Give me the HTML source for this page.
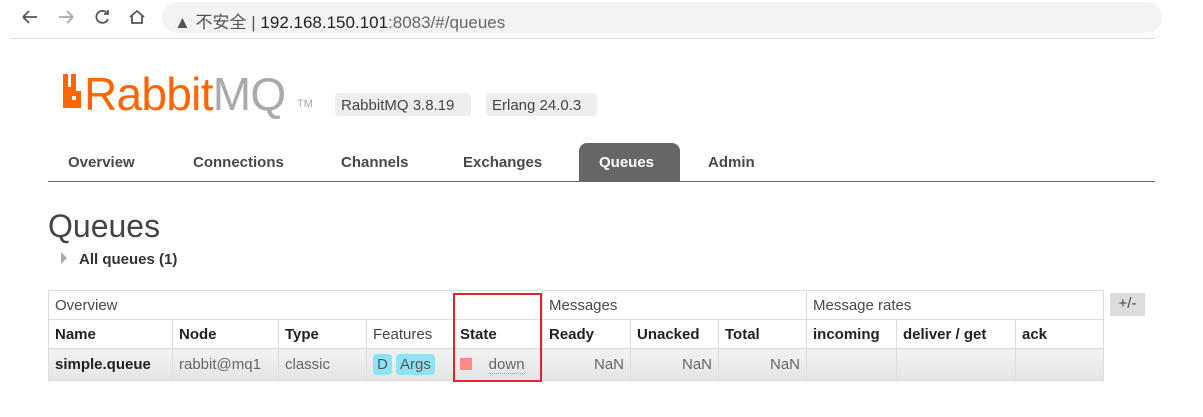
<!DOCTYPE html>
<html><head><meta charset="utf-8"><style>
*{margin:0;padding:0;box-sizing:border-box}
body{width:1203px;height:417px;background:#fff;position:relative;overflow:hidden;font-family:"Liberation Sans","Noto Sans CJK SC",sans-serif;color:#484848}
.a{position:absolute;white-space:nowrap}
.tab{position:absolute;top:154px;font-weight:bold;font-size:15px;color:#484848}
table{position:absolute;left:48px;top:290px;border-collapse:collapse;font-size:15px}
td{border:1px solid #ddd;padding:0 6px;height:29px;white-space:nowrap}
.h td{font-weight:bold;color:#222}
.d td{background:linear-gradient(#f2f2f2,#e4e4e4);height:32px;color:#666}
.r{text-align:right}
</style></head><body>
<div class="a" style="left:162px;top:2px;width:1000px;height:31px;background:#f1f3f4;border-radius:16px"></div>
<svg class="a" style="left:22px;top:7px" width="130" height="20" viewBox="0 0 130 20" fill="none" stroke-width="1.8">
<path d="M1 10h14M1 10l6-6M1 10l6 6" stroke="#555"/>
<path d="M37 10h14M51 10l-6-6M51 10l-6 6" stroke="#aaa"/>
<path d="M85 6a6 6 0 1 0 1 6M86 3v4h-4" stroke="#555"/>
<path d="M108 10l7-6 7 6M110 9v7h10v-7" stroke="#555"/>
</svg>
<div class="a" style="left:174px;top:8px;font-size:17px;color:#555">▲ 不安全 | <span style="color:#222">192.168.150.101</span><span style="color:#666">:8083/#/queues</span></div>
<div class="a" style="left:10px;top:38px;width:1145px;height:1px;background:#ddd"></div>
<svg class="a" style="left:63px;top:74px" width="18" height="34" viewBox="0 0 18 34"><path d="M0 0h5v13h3V0h5v17h5v17H0z" fill="#f60"/><rect x="9" y="22" width="4" height="4" fill="#fff"/></svg>
<div class="a" style="left:84px;top:67px;font-size:46px;letter-spacing:-0.7px;color:#f60">Rabbit<span style="color:#aaa">MQ</span></div>
<div class="a" style="left:297px;top:98px;font-size:11px;color:#aaa">TM</div>
<div class="a" style="left:335px;top:93px;width:136px;height:23px;background:#eee;border-radius:4px;font-size:15px;color:#444;padding:4px 6px 0">RabbitMQ 3.8.19</div>
<div class="a" style="left:486px;top:93px;width:111px;height:23px;background:#eee;border-radius:4px;font-size:15px;color:#444;padding:4px 6px 0">Erlang 24.0.3</div>
<div class="a" style="left:579px;top:143px;width:101px;height:38px;background:#666;border-radius:8px 8px 0 0"></div>
<div class="tab" style="left:68px">Overview</div>
<div class="tab" style="left:193px">Connections</div>
<div class="tab" style="left:341px">Channels</div>
<div class="tab" style="left:463px">Exchanges</div>
<div class="tab" style="left:599px;color:#fff">Queues</div>
<div class="tab" style="left:708px">Admin</div>
<div class="a" style="left:48px;top:181px;width:1107px;height:1px;background:#666"></div>
<div class="a" style="left:48px;top:208px;font-size:32px;color:#444">Queues</div>
<div class="a" style="left:61px;top:252px;width:0;height:0;border-left:6px solid #aaa;border-top:6px solid transparent;border-bottom:6px solid transparent"></div>
<div class="a" style="left:79px;top:251px;font-size:15px;font-weight:bold;color:#333">All queues (1)</div>
<table>
<tr><td colspan="5" style="width:494px">Overview</td><td colspan="3">Messages</td><td colspan="3">Message rates</td></tr>
<tr class="h"><td style="width:124px">Name</td><td style="width:106px">Node</td><td style="width:88px">Type</td><td style="width:87px;font-weight:normal;color:#444">Features</td><td style="width:89px">State</td><td style="width:88px">Ready</td><td style="width:88px">Unacked</td><td style="width:88px">Total</td><td style="width:90px">incoming</td><td style="width:119px">deliver / get</td><td style="width:88px">ack</td></tr>
<tr class="d"><td style="font-weight:bold;color:#222">simple.queue</td><td>rabbit@mq1</td><td>classic</td><td><span style="background:#8fe3f7;border-radius:4px;padding:2px 4px;color:#555">D</span> <span style="background:#8fe3f7;border-radius:4px;padding:2px 4px;color:#555">Args</span></td><td><span style="display:inline-block;width:12px;height:12px;background:#f88;vertical-align:-1px"></span>&nbsp;&nbsp;&nbsp;&nbsp;<span style="border-bottom:1px dotted #999">down</span></td><td class="r">NaN</td><td class="r">NaN</td><td class="r">NaN</td><td></td><td></td><td></td></tr>
</table>
<div class="a" style="left:453px;top:293px;width:89px;height:89px;border:2px solid #e8202a"></div>
<div class="a" style="left:1110px;top:293px;width:35px;height:23px;background:#ddd;font-size:15px;color:#444;text-align:center;padding-top:2px">+/-</div>
</body></html>
